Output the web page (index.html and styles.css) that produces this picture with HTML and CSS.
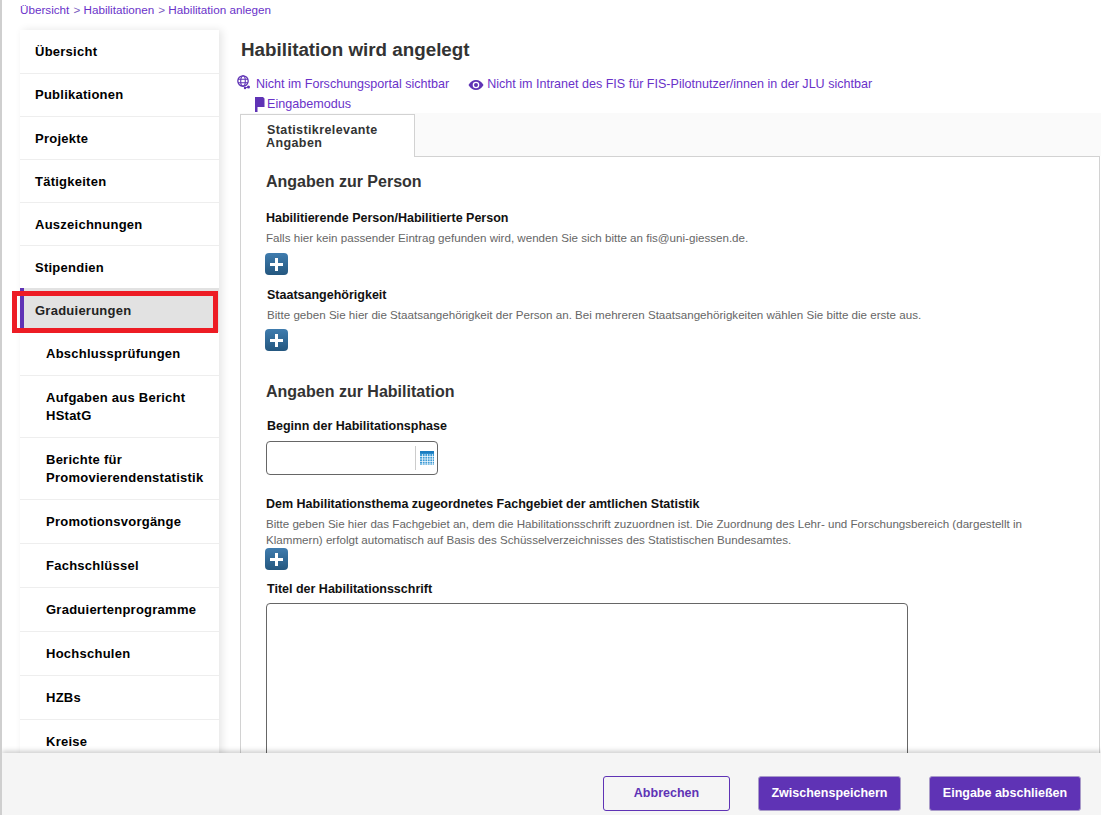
FILE: index.html
```html
<!DOCTYPE html>
<html lang="de">
<head>
    <meta charset="UTF-8">
    <title>Habilitation anlegen</title>
    <link rel="stylesheet" href="styles.css">
</head>
<body>
    <div class="page">
        <nav class="breadcrumb">
            <a href="#">Übersicht</a><span class="sep">&gt;</span>
            <a href="#">Habilitationen</a><span class="sep">&gt;</span>
            <a href="#">Habilitation anlegen</a>
        </nav>

        <div class="columns">
            <aside class="sidebar">
                <a class="menu-item" href="#">Übersicht</a>
                <a class="menu-item" href="#">Publikationen</a>
                <a class="menu-item" href="#">Projekte</a>
                <a class="menu-item" href="#">Tätigkeiten</a>
                <a class="menu-item" href="#">Auszeichnungen</a>
                <a class="menu-item" href="#">Stipendien</a>
                <a class="menu-item active" href="#">Graduierungen</a>
                <a class="menu-item sub" href="#">Abschlussprüfungen</a>
                <a class="menu-item sub" href="#">Aufgaben aus Bericht HStatG</a>
                <a class="menu-item sub" href="#">Berichte für Promovierendenstatistik</a>
                <a class="menu-item sub" href="#">Promotionsvorgänge</a>
                <a class="menu-item sub" href="#">Fachschlüssel</a>
                <a class="menu-item sub" href="#">Graduiertenprogramme</a>
                <a class="menu-item sub" href="#">Hochschulen</a>
                <a class="menu-item sub" href="#">HZBs</a>
                <a class="menu-item sub" href="#">Kreise</a>
            </aside>

            <main class="content">
                <h1>Habilitation wird angelegt</h1>

                <div class="status-line">
                    <a class="status portal" href="#">
                        <svg class="icon-globe" viewBox="0 0 14 15" width="14" height="15">
                            <circle cx="6" cy="6" r="5.2" fill="none" stroke="#5f33b5" stroke-width="1.3"/>
                            <ellipse cx="6" cy="6" rx="2.3" ry="5.2" fill="none" stroke="#5f33b5" stroke-width="1.1"/>
                            <path d="M1 4.2h10M1 7.8h10" stroke="#5f33b5" stroke-width="1.1"/>
                            <circle cx="11.5" cy="12" r="1.5" fill="#5f33b5"/>
                            <circle cx="8" cy="13" r="1.2" fill="#5f33b5"/>
                            <path d="M8 13l3.5-1" stroke="#5f33b5"/>
                        </svg>
                        Nicht im Forschungsportal sichtbar
                    </a>
                    <a class="status intranet" href="#">
                        <svg class="icon-eye" viewBox="0 0 16 12" width="16" height="12">
                            <path d="M0.5 6C2.5 2.6 5 1 8 1s5.5 1.6 7.5 5c-2 3.4-4.5 5-7.5 5S2.5 9.4 0.5 6z" fill="#5f33b5"/>
                            <circle cx="8" cy="6" r="3.3" fill="#fff"/>
                            <circle cx="8" cy="6" r="2" fill="#5f33b5"/>
                        </svg>
                        Nicht im Intranet des FIS für FIS-Pilotnutzer/innen in der JLU sichtbar
                    </a>
                </div>
                <div class="mode-line">
                    <svg viewBox="0 0 10 15" width="10" height="15">
                        <path d="M0 0h8l1.5 1.5v8.5H2.5v5H0z" fill="#5f33b5"/>
                    </svg>
                    <a href="#">Eingabemodus</a>
                </div>

                <div class="tabs">
                    <a class="tab" href="#">Statistikrelevante<br><span class="tab-second">Angaben</span></a>
                </div>

                <div class="panel">
                    <h2 class="first">Angaben zur Person</h2>

                    <div class="field person">
                        <h3>Habilitierende Person/Habilitierte Person</h3>
                        <p class="hint">Falls hier kein passender Eintrag gefunden wird, wenden Sie sich bitte an fis@uni-giessen.de.</p>
                        <button class="add-btn" type="button">
                            <svg viewBox="0 0 13 13" width="13" height="13"><path d="M6.5 0v13M0 6.5h13" stroke="#fff" stroke-width="3"/></svg>
                        </button>
                    </div>

                    <div class="field nation">
                        <h3>Staatsangehörigkeit</h3>
                        <p class="hint">Bitte geben Sie hier die Staatsangehörigkeit der Person an. Bei mehreren Staatsangehörigkeiten wählen Sie bitte die erste aus.</p>
                        <button class="add-btn" type="button">
                            <svg viewBox="0 0 13 13" width="13" height="13"><path d="M6.5 0v13M0 6.5h13" stroke="#fff" stroke-width="3"/></svg>
                        </button>
                    </div>

                    <h2 class="second">Angaben zur Habilitation</h2>

                    <div class="field begin">
                        <h3>Beginn der Habilitationsphase</h3>
                        <div class="date-input">
                            <span class="date-btn">
                                <svg viewBox="0 0 14 14" width="14" height="14">
                                    <rect width="14" height="14" fill="#3d9bd6"/>
                                    <rect width="14" height="2.5" fill="#1a7cc0"/>
                                    <path d="M2.5 3v11M5 3v11M7.5 3v11M10 3v11M12.5 3v11M0 5.5h14M0 8h14M0 10.5h14M0 13h14" stroke="#fff" stroke-width="0.7"/>
                                </svg>
                            </span>
                        </div>
                    </div>

                    <div class="field subject">
                        <h3>Dem Habilitationsthema zugeordnetes Fachgebiet der amtlichen Statistik</h3>
                        <p class="hint">Bitte geben Sie hier das Fachgebiet an, dem die Habilitationsschrift zuzuordnen ist. Die Zuordnung des Lehr- und Forschungsbereich (dargestellt in Klammern) erfolgt automatisch auf Basis des Schüsselverzeichnisses des Statistischen Bundesamtes.</p>
                        <button class="add-btn" type="button">
                            <svg viewBox="0 0 13 13" width="13" height="13"><path d="M6.5 0v13M0 6.5h13" stroke="#fff" stroke-width="3"/></svg>
                        </button>
                    </div>

                    <div class="field thesis">
                        <h3>Titel der Habilitationsschrift</h3>
                        <textarea class="thesis-input"></textarea>
                    </div>
                </div>
            </main>
        </div>

        <footer class="action-bar">
            <button class="btn btn-outline" type="button">Abbrechen</button>
            <button class="btn btn-primary save" type="button">Zwischenspeichern</button>
            <button class="btn btn-primary finish" type="button">Eingabe abschließen</button>
        </footer>
    </div>
</body>
</html>
```

FILE: styles.css
```css
:root {
    --purple: #5f33b5;
    --link: #6a32c9;
    --line: #d2d2d2;
    --text: #222;
    --hint: #666;
}

* {
    margin: 0;
    padding: 0;
    box-sizing: border-box;
}

html,
body {
    height: 100%;
    overflow: hidden;
}

body {
    font-family: "Liberation Sans", Arial, sans-serif;
    font-size: 12.5px;
    color: var(--text);
    background: #fff;
}

a {
    color: var(--link);
    text-decoration: none;
}

.page {
    position: relative;
    height: 815px;
    overflow: hidden;
    border-left: 2px solid #cfcfcf;
}

/* breadcrumb */
.breadcrumb {
    height: 30px;
    padding: 3px 0 0 18px;
    line-height: 14px;
    font-size: 11.7px;
}

.breadcrumb .sep {
    margin-left: 4px;
    color: #7a5cc0;
}

/* two columns */
.columns {
    display: flex;
    align-items: flex-start;
}

.sidebar {
    flex: 0 0 199px;
    margin-left: 18px;
    background: #fff;
    box-shadow: 3px 0 8px rgba(0, 0, 0, 0.1);
}

.menu-item {
    display: flex;
    align-items: center;
    min-height: 43px;
    padding: 0 15px;
    border-bottom: 1px solid #eee;
    color: #000;
    font-size: 13px;
    font-weight: bold;
    line-height: 18px;
    letter-spacing: 0.25px;
}

.menu-item:first-child {
    min-height: 44px;
}

.menu-item:nth-child(n+3):nth-child(-n+7) {
    padding-top: 2px;
}

.menu-item.active {
    position: relative;
    min-height: 44px;
    margin-top: -1px;
    background: #e2e2e2;
    border-bottom-color: #e2e2e2;
    color: #222;
}

.menu-item.active::before {
    content: "";
    position: absolute;
    left: 0;
    top: 0;
    bottom: 0;
    width: 4px;
    background: var(--purple);
}

/* red marker around the active entry */
.menu-item.active::after {
    content: "";
    position: absolute;
    left: -8px;
    right: 1px;
    top: 3px;
    bottom: -2px;
    border: 5px solid #ed1c24;
}

.menu-item.sub {
    min-height: 44px;
    padding-left: 26px;
    padding-right: 10px;
}

.menu-item.sub:nth-child(9),
.menu-item.sub:nth-child(10) {
    min-height: 62px;
}

.content {
    flex: 1;
    padding: 9px 1px 0 21px;
    min-width: 0;
}

h1 {
    margin-left: 1px;
    font-size: 18.8px;
    line-height: 22px;
    color: #333;
}

.status-line {
    display: flex;
    margin: 15px 0 0 -3px;
    font-size: 12.55px;
    line-height: 16px;
}

.status {
    display: flex;
    align-items: center;
}

.icon-globe {
    margin: -3px 5px 0 0;
}

.status.intranet {
    margin-left: 19px;
}

.icon-eye {
    margin: 2px 3px 0 0;
}

.mode-line {
    display: flex;
    align-items: center;
    height: 16px;
    margin: 4px 0 0 15px;
    font-size: 12.6px;
    line-height: 16px;
}

.mode-line svg {
    margin-right: 2px;
}

.tabs {
    height: 43px;
    margin: 1px -1px 0 0;
    padding-top: 1px;
    background: #fafafa;
}

.tab {
    position: relative;
    display: block;
    width: 175px;
    height: 43px;
    padding: 9px 0 0 26px;
    background: #fff;
    border: 1px solid var(--line);
    border-bottom: none;
    color: #333;
    font-weight: bold;
    line-height: 13px;
    letter-spacing: 0.4px;
}

.tab-second {
    margin-left: -1px;
}

.panel {
    height: 700px;
    padding: 0 0 0 25px;
    border: 1px solid var(--line);
}

h2 {
    font-size: 16px;
    line-height: 20px;
    color: #333;
}

h2.first {
    padding-top: 15px;
}

h2.second {
    margin-top: 31px;
}

h3 {
    font-size: 12.5px;
    line-height: 16px;
    color: #111;
}

.hint {
    margin-top: 4px;
    color: var(--hint);
    line-height: 16px;
    font-size: 11.6px;
}

.field.person {
    margin-top: 18px;
}

.field.nation {
    margin: 12px 0 0 1px;
}

.field.nation .add-btn {
    margin: 6px 0 0 -2px;
}

.field.begin {
    margin: 16px 0 0 1px;
}

.field.subject {
    margin-top: 21px;
    max-width: 780px;
}

.field.thesis {
    margin: 11px 0 0 1px;
}

.add-btn {
    display: flex;
    align-items: center;
    justify-content: center;
    width: 23px;
    height: 22px;
    margin: 7px 0 0 -1px;
    border: none;
    border-radius: 4px;
    background: linear-gradient(#3f7cae, #24577f);
}

.subject .add-btn {
    margin-top: 0;
}

.date-input {
    display: flex;
    justify-content: flex-end;
    align-items: center;
    width: 172px;
    height: 34px;
    margin: 7px 0 0 -1px;
    padding-right: 3px;
    border: 1px solid #666;
    border-radius: 4px;
}

.date-btn {
    display: flex;
    align-items: center;
    height: 24px;
    padding-left: 4px;
    border-left: 1px solid #ccc;
}

.thesis-input {
    display: block;
    width: 642px;
    height: 300px;
    margin: 6px 0 0 -1px;
    border: 1px solid #666;
    border-radius: 4px;
    resize: none;
}

/* bar stays over the form */
.action-bar {
    position: absolute;
    left: 0;
    right: 0;
    bottom: 0;
    display: flex;
    height: 62px;
    padding: 23px 0 0 601px;
    background: #f5f5f5;
    box-shadow: 0 -2px 5px rgba(0, 0, 0, 0.2);
}

.btn {
    height: 35px;
    padding-bottom: 2px;
    border-radius: 3px;
    font-family: inherit;
    font-size: 12.5px;
    font-weight: bold;
}

.btn-outline {
    width: 127px;
    background: #f5f5f5;
    border: 1px solid var(--purple);
    color: var(--purple);
}

.btn-primary {
    background: var(--purple);
    border: 1px solid #a99bc9;
    color: #fff;
}

.btn.save {
    width: 143px;
    margin-left: 28px;
}

.btn.finish {
    width: 152px;
    margin-left: 28px;
}
```
